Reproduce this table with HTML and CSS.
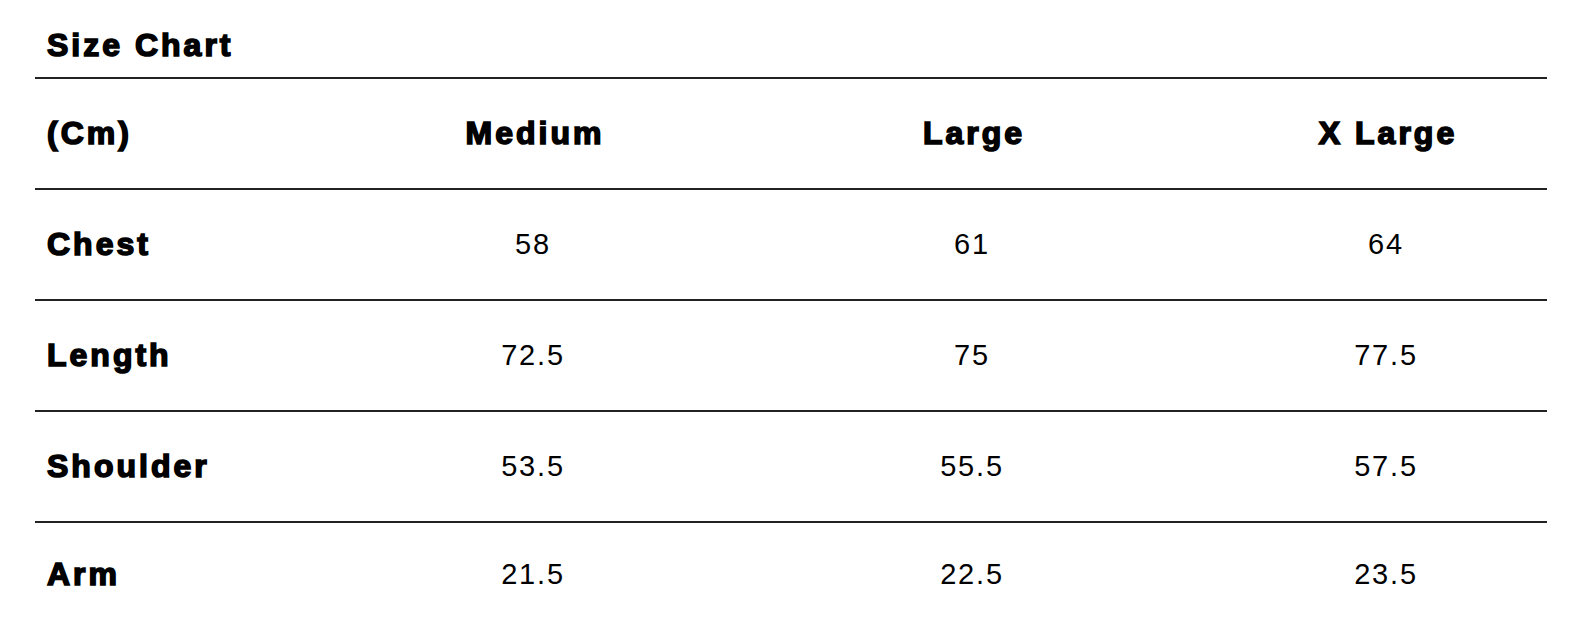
FILE: index.html
```html
<!DOCTYPE html>
<html lang="en">
<head>
    <meta charset="UTF-8">
    <meta name="viewport" content="width=device-width, initial-scale=1.0">
    <title>Size Chart</title>
    <link rel="stylesheet" href="styles.css">
</head>
<body>
    <div class="chart">
        <h2 class="chart-title">Size Chart</h2>
        <table class="size-table">
            <colgroup>
                <col class="col-label">
                <col class="col-m">
                <col class="col-l">
                <col class="col-xl">
            </colgroup>
            <tr>
                <th>(Cm)</th>
                <th>Medium</th>
                <th>Large</th>
                <th>X Large</th>
            </tr>
            <tr>
                <th>Chest</th>
                <td>58</td>
                <td>61</td>
                <td>64</td>
            </tr>
            <tr>
                <th>Length</th>
                <td>72.5</td>
                <td>75</td>
                <td>77.5</td>
            </tr>
            <tr>
                <th>Shoulder</th>
                <td>53.5</td>
                <td>55.5</td>
                <td>57.5</td>
            </tr>
            <tr class="last-row">
                <th>Arm</th>
                <td>21.5</td>
                <td>22.5</td>
                <td>23.5</td>
            </tr>
        </table>
    </div>
</body>
</html>
```

FILE: styles.css
```css
body {
    margin: 0;
    padding: 0;
    background-color: #fff;
    color: #000;
    font-family: "Liberation Sans", Arial, sans-serif;
}
.chart {
    width: 1512px;
    margin-left: 35px;
}
.chart-title {
    margin: 0;
    padding: 29px 12px 16px;
    font-size: 32px;
    line-height: 32px;
    font-weight: bold;
    letter-spacing: 3px;
    -webkit-text-stroke: 1.6px #000;
}
.size-table {
    width: 1512px;
    border-collapse: collapse;
    table-layout: fixed;
}
.col-label { width: 316px; }
.col-m { width: 368px; }
.col-l { width: 510px; }
.col-xl { width: 318px; }
.size-table th,
.size-table td {
    height: 109px;
    padding: 0;
    border-top: 2px solid #222;
    text-align: center;
    vertical-align: middle;
}
.size-table .last-row th,
.size-table .last-row td {
    height: 102px;
}
.size-table th {
    font-size: 32px;
    font-weight: bold;
    letter-spacing: 3px;
    -webkit-text-stroke: 1.6px #000;
}
.size-table tr th:first-child {
    text-align: left;
    padding-left: 12px;
}
.size-table td {
    font-size: 29px;
    letter-spacing: 1.8px;
    padding-right: 4px;
}
```
